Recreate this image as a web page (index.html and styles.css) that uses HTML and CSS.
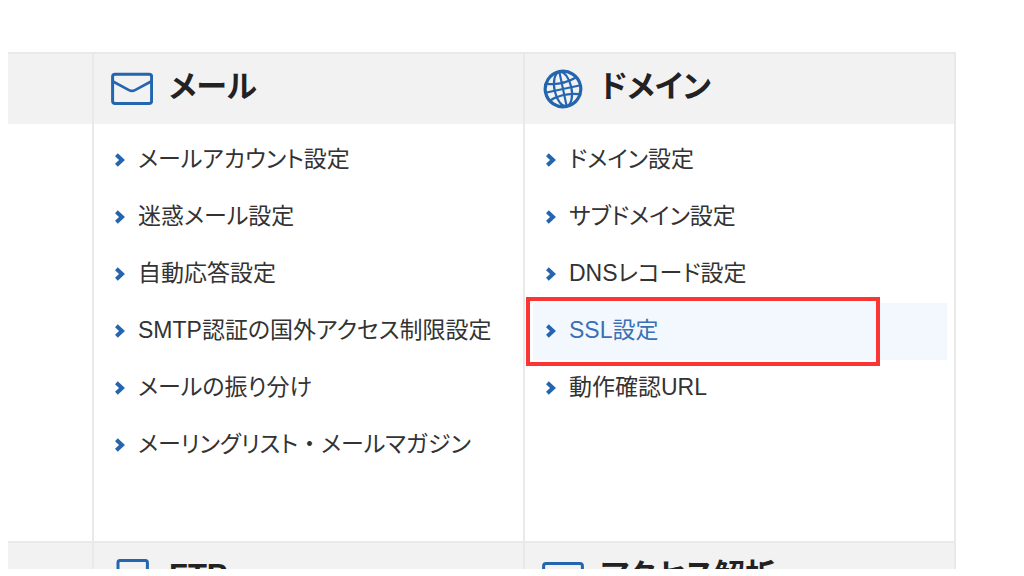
FILE: index.html
```html
<!DOCTYPE html>
<html lang="ja">
<head>
<meta charset="utf-8">
<title>サーバーパネル</title>
<link rel="stylesheet" href="styles.css">
</head>
<body>
<svg class="defs" aria-hidden="true">
  <symbol id="chevron" viewBox="0 0 10 14"><path d="M1.4 1.8L7 7l-5.6 5.2" fill="none" stroke="currentColor" stroke-width="4"/></symbol>
</svg>
<main class="panel">
  <section class="cell"><div class="cell-head"></div></section>
  <section class="cell">
    <div class="cell-head">
      <svg class="icon" viewBox="0 0 42 40" aria-hidden="true"><g fill="none" stroke="currentColor" stroke-width="3"><rect x="1.6" y="5.2" width="39" height="29.2" rx="2.5"/><path d="M2 12.5l16 8.6q3 1.6 6 0l16-8.6" stroke-width="2.6"/></g></svg>
      <h2 class="title">メール</h2>
    </div>
    <ul class="menu">
      <li class="item"><a class="link" href="#"><svg class="chevron"><use href="#chevron"/></svg>メールアカウント設定</a></li>
      <li class="item"><a class="link" href="#"><svg class="chevron"><use href="#chevron"/></svg>迷惑メール設定</a></li>
      <li class="item"><a class="link" href="#"><svg class="chevron"><use href="#chevron"/></svg>自動応答設定</a></li>
      <li class="item"><a class="link" href="#"><svg class="chevron"><use href="#chevron"/></svg>SMTP認証の国外アクセス制限設定</a></li>
      <li class="item"><a class="link" href="#"><svg class="chevron"><use href="#chevron"/></svg>メールの振り分け</a></li>
      <li class="item"><a class="link" href="#"><svg class="chevron"><use href="#chevron"/></svg><span>メーリングリスト<span class="dot">・</span>メールマガジン</span></a></li>
    </ul>
  </section>
  <section class="cell">
    <div class="cell-head">
      <svg class="icon" viewBox="0 0 42 40" aria-hidden="true"><g transform="rotate(-12 21 20)" fill="none" stroke="currentColor" stroke-width="2.2"><circle cx="21" cy="20" r="17.8" stroke-width="3.2"/><ellipse cx="21" cy="20" rx="8.5" ry="17.5"/><path d="M21 2v36M3 20h36M6 11.5q15 5 30 0M6 28.5q15-5 30 0"/></g></svg>
      <h2 class="title">ドメイン</h2>
    </div>
    <ul class="menu">
      <li class="item"><a class="link" href="#"><svg class="chevron"><use href="#chevron"/></svg>ドメイン設定</a></li>
      <li class="item"><a class="link" href="#"><svg class="chevron"><use href="#chevron"/></svg>サブドメイン設定</a></li>
      <li class="item"><a class="link" href="#"><svg class="chevron"><use href="#chevron"/></svg>DNSレコード設定</a></li>
      <li class="item marked"><a class="link current" href="#"><svg class="chevron"><use href="#chevron"/></svg>SSL設定</a></li>
      <li class="item"><a class="link" href="#"><svg class="chevron"><use href="#chevron"/></svg>動作確認URL</a></li>
    </ul>
  </section>
  <section class="cell"><div class="cell-head"></div></section>
  <section class="cell">
    <div class="cell-head">
      <svg class="icon" viewBox="0 0 42 40" aria-hidden="true"><rect x="7" y="2.4" width="29.4" height="36" rx="2" fill="none" stroke="currentColor" stroke-width="3"/></svg>
      <h2 class="title">FTP</h2>
    </div>
  </section>
  <section class="cell">
    <div class="cell-head">
      <svg class="icon" viewBox="0 0 42 40" aria-hidden="true"><rect x="1.6" y="5.6" width="38.8" height="29" rx="2.5" fill="none" stroke="currentColor" stroke-width="3"/></svg>
      <h2 class="title">アクセス解析</h2>
    </div>
  </section>
</main>
</body>
</html>
```
FILE: styles.css
```css
* {
  box-sizing: border-box;
}

body {
  display: flex;
  height: 100vh;
  margin: 0;
  padding: 52px 68px 7px 8px;
  overflow: hidden;
  background: #fff;
  color: #333;
  font-family: "Liberation Sans", "Noto Sans CJK JP", sans-serif;
  font-feature-settings: "palt";
}

.defs {
  display: none;
}

.panel {
  display: grid;
  flex: 1;
  grid-template-columns: 84fr 431fr 433fr;
  align-content: start;
  overflow: hidden;
}

.cell {
  border-top: 2px solid #e9e9e9;
  border-left: 2px solid #e9e9e9;
}

.cell:nth-child(3n + 1) {
  border-left: 0;
}

.cell:nth-child(3n) {
  border-right: 2px solid #e9e9e9;
}

.cell-head {
  display: flex;
  align-items: center;
  gap: 16px;
  height: 70px;
  padding: 0 17px;
  background: #f2f2f2;
}

.icon {
  width: 42px;
  height: 40px;
  color: #2465af;
}

.title {
  margin: 0;
  padding-bottom: 4px;
  color: #222;
  font-size: 31px;
  line-height: 40px;
}

.menu {
  margin: 0;
  padding: 8px 7px 67px 8px;
  list-style: none;
}

.item {
  position: relative;
}

.link {
  display: flex;
  align-items: center;
  gap: 13px;
  padding: 0 13px 2px;
  color: inherit;
  font-size: 23px;
  line-height: 55px;
  white-space: nowrap;
  text-decoration: none;
}

.dot {
  font-feature-settings: normal;
}

.chevron {
  width: 10px;
  height: 14px;
  color: #2465af;
}

.current {
  background: #f3f8fe;
  color: #3a70b5;
}

.marked::after {
  content: "";
  position: absolute;
  inset: -6px 67px -6px -7px;
  border: 4px solid #fb3434;
  pointer-events: none;
}
```
